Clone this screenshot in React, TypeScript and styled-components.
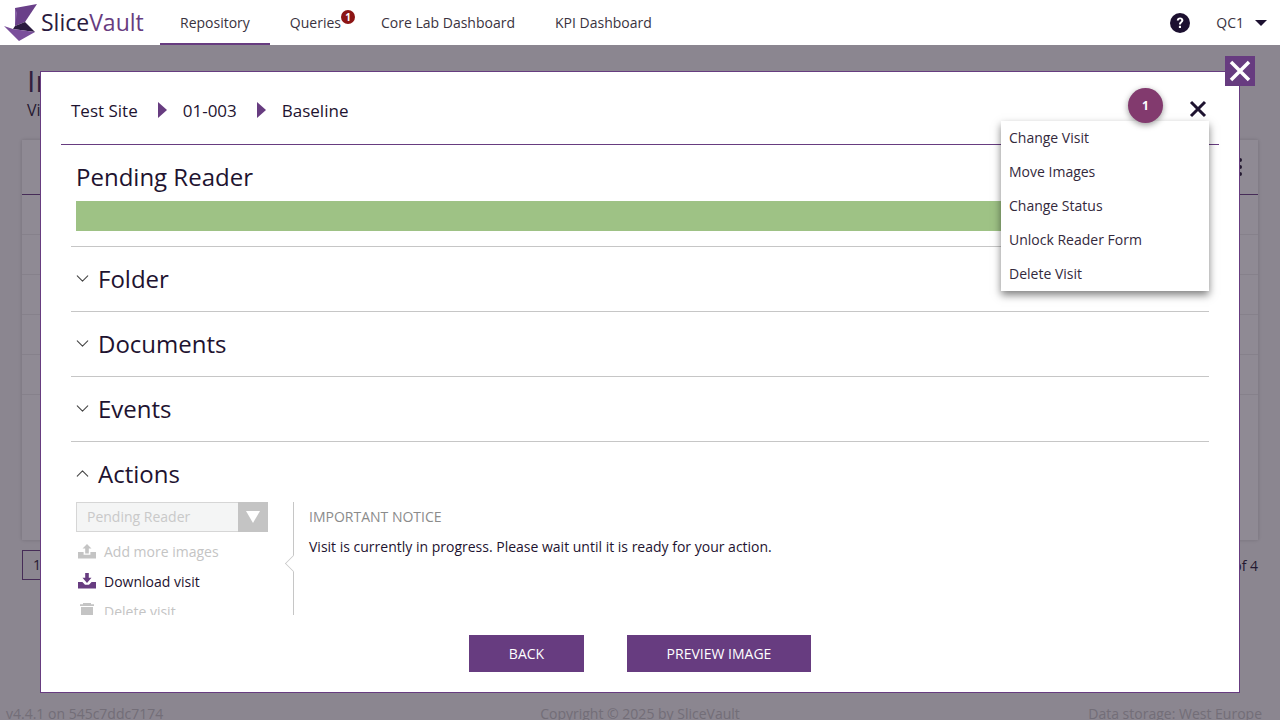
import styled, { createGlobalStyle } from 'styled-components';
import { ChevronDown, ChevronUp } from 'lucide-react';

const purple = '#673c80';
const ink = '#1e1330';

const GlobalStyle = createGlobalStyle`
  html, body {
    margin: 0;
    padding: 0;
    height: 100%;
    overflow: hidden;
    font-family: "Open Sans", "Liberation Sans", sans-serif;
    color: ${ink};
    background: #f7f7f7;
  }
  * { box-sizing: border-box; }
`;

const Logo = () => (
  <svg width="34" height="38" viewBox="0 0 34 38">
    <path d="M11 4 L33 0 L21 18 L11 22 Z" fill="#6a4089" />
    <path d="M21 18 L11 22 L9 25 L31 28 Z" fill="#2a1a3e" />
    <path d="M0 22 L9 25 L31 28 L15 37 Z" fill="#7a4f9b" />
    <path d="M11 4 L13 9 L11 22 Z" fill="#8a63a8" />
  </svg>
);

const HelpIcon = () => (
  <svg width="20" height="20" viewBox="0 0 20 20">
    <circle cx="10" cy="10" r="10" fill="#1c1030" />
    <path d="M6.8 7.6 C6.8 5.6 8.2 4.4 10.1 4.4 C12 4.4 13.4 5.5 13.4 7.2 C13.4 9.4 10.9 9.5 10.9 11.6 L9 11.6 C9 8.8 11.3 8.7 11.3 7.3 C11.3 6.6 10.8 6.2 10.1 6.2 C9.3 6.2 8.8 6.8 8.8 7.6 Z" fill="#fff" />
    <rect x="8.9" y="12.8" width="2.1" height="2.2" fill="#fff" />
  </svg>
);

const UploadIcon = ({ color }: { color: string }) => (
  <svg width="18" height="16" viewBox="0 0 18 16">
    <path d="M9 1 L13.5 5.6 L10.8 5.6 L10.8 10.4 L7.2 10.4 L7.2 5.6 L4.5 5.6 Z" fill={color} />
    <path d="M0 9 L5.6 9 L5.6 11.8 L12.4 11.8 L12.4 9 L18 9 L18 15.5 L0 15.5 Z" fill={color} />
  </svg>
);

const DownloadIcon = ({ color }: { color: string }) => (
  <svg width="18" height="16" viewBox="0 0 18 16">
    <path d="M7.2 0 L10.8 0 L10.8 4.8 L13.5 4.8 L9 10 L4.5 4.8 L7.2 4.8 Z" fill={color} />
    <path d="M0 9 L4.4 9 L7 11.8 L11 11.8 L13.6 9 L18 9 L18 15.5 L0 15.5 Z" fill={color} />
  </svg>
);

const TrashIcon = ({ color }: { color: string }) => (
  <svg width="18" height="16" viewBox="0 0 18 16">
    <path d="M5 0 L13 0 L13 1.2 L16 1.2 L16 3 L2 3 L2 1.2 L5 1.2 Z" fill={color} />
    <path d="M3 4 L15 4 L15 15.5 L3 15.5 Z" fill={color} />
  </svg>
);

const Crumb = () => (
  <CrumbWrap>
    <svg width="9" height="16" viewBox="0 0 9 16">
      <path d="M0 0 L9 8 L0 16 Z" fill={purple} />
    </svg>
  </CrumbWrap>
);

const CrumbWrap = styled.span`
  display: flex;
  margin-right: -4px;
`;

const Header = styled.header`
  position: relative;
  z-index: 1;
  height: 45px;
  display: flex;
  align-items: stretch;
  background: #fff;
`;

const Brand = styled.div`
  width: 160px;
  display: flex;
  align-items: center;
  gap: 3px;
  padding-left: 4px;
  font-size: 23px;
  color: #2a1a3e;
  span { color: ${purple}; }
  div { padding-bottom: 2px; }
`;

const Nav = styled.nav`
  display: flex;
  flex: 1;
`;

const NavItem = styled.a<{ $active?: boolean }>`
  position: relative;
  display: flex;
  align-items: center;
  padding: 2px 20px 0;
  font-size: 14px;
  color: #3a3340;
  border-bottom: 2px solid ${p => (p.$active ? purple : 'transparent')};
`;

const NavBadge = styled.span`
  position: absolute;
  top: 10px;
  right: 6px;
  width: 14px;
  height: 14px;
  border-radius: 50%;
  background: #8c1515;
  color: #fff;
  font-size: 10px;
  font-weight: 700;
  line-height: 14px;
  text-align: center;
`;

const HeaderRight = styled.div`
  display: flex;
  align-items: center;
  padding-right: 13px;
  font-size: 14px;
  color: #3a3340;
`;

const UserName = styled.span`
  margin-left: 26px;
`;

const Caret = styled.span`
  margin-left: 11px;
  width: 0;
  height: 0;
  border-left: 6px solid transparent;
  border-right: 6px solid transparent;
  border-top: 6px solid #1c1030;
`;

const Page = styled.main`
  padding: 0 22px;
  height: 675px;
  display: flex;
  flex-direction: column;
`;

const PageTitle = styled.h1`
  margin: 16px 0 0;
  padding-left: 5px;
  height: 41px;
  font-size: 30px;
  font-weight: 400;
  line-height: 40px;
  color: #3c2350;
`;

const PageSub = styled.div`
  padding-left: 5px;
  font-size: 16px;
  line-height: 16px;
  height: 38px;
`;

const TableCard = styled.section`
  height: 400px;
  background: #fff;
  box-shadow: 0 0 4px rgba(0, 0, 0, 0.2);
  display: flex;
  flex-direction: column;
`;

const TableHead = styled.div`
  height: 55px;
  border-bottom: 1px solid ${purple};
  display: flex;
  justify-content: flex-end;
  align-items: center;
  padding: 0 16px;
`;

const Dots = styled.div`
  display: grid;
  gap: 3px;
  i {
    display: block;
    width: 4px;
    height: 4px;
    border-radius: 50%;
    background: ${ink};
  }
`;

const TableRow = styled.div`
  height: 40px;
  border-bottom: 1px solid #ececec;
`;

const Pager = styled.div`
  margin-top: 10px;
  height: 30px;
  display: flex;
  justify-content: space-between;
  align-items: center;
  font-size: 14px;
`;

const PagerBox = styled.div`
  width: 40px;
  height: 30px;
  border: 1px solid ${purple};
  padding-left: 10px;
  line-height: 28px;
`;

const Footer = styled.footer`
  position: absolute;
  left: 0;
  right: 0;
  top: 704px;
  padding: 0 18px;
  display: grid;
  grid-template-columns: 1fr auto 1fr;
  font-size: 14px;
  line-height: 19px;
  color: #c4c4c4;
`;

const FooterLeft = styled.span`
  margin-left: -12px;
`;

const FooterRight = styled.span`
  text-align: right;
`;

const Backdrop = styled.div`
  position: fixed;
  inset: 45px 0 0 0;
  z-index: 2;
  background: rgba(40, 30, 50, 0.52);
`;

const Modal = styled.div`
  position: absolute;
  left: 40px;
  top: 26px;
  width: 1200px;
  height: 622px;
  background: #fff;
  border: 1px solid ${purple};
  padding: 0 20px;
  display: flex;
  flex-direction: column;
`;

const OuterClose = styled.button`
  position: absolute;
  left: 1225px;
  top: 11px;
  width: 30px;
  height: 30px;
  padding: 0;
  border: 0;
  background: ${purple};
  display: flex;
  align-items: center;
  justify-content: center;
`;

const ModalTop = styled.div`
  position: relative;
  height: 73px;
  flex: none;
  display: flex;
  align-items: center;
  gap: 20px;
  padding: 4px 0 0 10px;
  border-bottom: 1px solid ${purple};
  font-size: 17px;
`;

const Counter = styled.span`
  position: absolute;
  z-index: 2;
  left: 1067px;
  top: 16px;
  width: 35px;
  height: 35px;
  border-radius: 50%;
  background: #823a6e;
  color: #fff;
  font-size: 12px;
  font-weight: 700;
  line-height: 35px;
  text-align: center;
  box-shadow: 0 2px 6px rgba(0, 0, 0, 0.4);
`;

const InnerClose = styled.span`
  position: absolute;
  left: 1128px;
  top: 28px;
  width: 18px;
  height: 18px;
`;

const ActionMenu = styled.ul`
  position: absolute;
  left: 940px;
  top: 49px;
  z-index: 1;
  width: 208px;
  margin: 0;
  padding: 0;
  list-style: none;
  background: #fff;
  box-shadow: 0 4px 8px rgba(0, 0, 0, 0.5);
`;

const ActionMenuItem = styled.li`
  height: 34px;
  padding-left: 8px;
  font-size: 14px;
  line-height: 34px;
  color: #33293c;
`;

const Status = styled.div`
  flex: none;
  padding: 14px 10px 0 15px;
`;

const StatusTitle = styled.div`
  font-size: 24px;
  line-height: 36px;
  height: 42px;
`;

const StatusBar = styled.div`
  height: 30px;
  background: #9ec285;
`;

const Section = styled.div`
  flex: none;
  height: 65px;
  margin: 0 10px;
  border-top: 1px solid #c6c6c6;
  display: flex;
  align-items: center;
  gap: 5px;
  padding: 0 0 1px 0;
  font-size: 24px;
  line-height: 30px;
  svg { margin-left: 1px; }
`;

const SectionGap = styled.div`
  height: 15px;
  flex: none;
`;

const ActionsBody = styled.div`
  flex: none;
  height: 113px;
  margin: -4px 10px 0 15px;
  display: flex;
  overflow: hidden;
`;

const ActionList = styled.div`
  width: 192px;
  flex: none;
`;

const StatusSelect = styled.div`
  height: 30px;
  display: flex;
  background: #f4f5f5;
  border: 1px solid #d6d6d6;
  border-right: 0;
  font-size: 14px;
  line-height: 28px;
  color: #c9c9c9;
  margin-bottom: 4px;
`;

const SelectText = styled.span`
  flex: 1;
  padding-left: 10px;
`;

const SelectArrow = styled.span`
  width: 30px;
  margin: -1px 0;
  background: #c4c4c4;
  display: flex;
  align-items: center;
  justify-content: center;
  &::after {
    content: '';
    border-left: 7px solid transparent;
    border-right: 7px solid transparent;
    border-top: 12px solid #fff;
  }
`;

const ActionLink = styled.div<{ $disabled?: boolean }>`
  height: 30px;
  display: flex;
  align-items: center;
  gap: 8px;
  padding-left: 2px;
  font-size: 14px;
  color: ${p => (p.$disabled ? '#c4c4c4' : ink)};
`;

const Notice = styled.div`
  position: relative;
  flex: 1;
  margin-left: 25px;
  padding: 5px 15px;
  border-left: 1px solid #c6c6c6;
  font-size: 14px;
  &::before {
    content: '';
    position: absolute;
    left: -8px;
    top: 54px;
    width: 14px;
    height: 14px;
    background: #fff;
    border-left: 1px solid #c6c6c6;
    border-bottom: 1px solid #c6c6c6;
    transform: rotate(45deg) scale(0.8);
  }
`;

const NoticeTitle = styled.div`
  color: #8b8b8b;
  line-height: 20px;
  margin-bottom: 10px;
`;

const NoticeText = styled.div`
  line-height: 20px;
`;

const Buttons = styled.div`
  flex: none;
  margin-top: 20px;
  display: flex;
  justify-content: center;
  gap: 43px;
`;

const Button = styled.button<{ $wide?: boolean }>`
  width: ${p => (p.$wide ? '184px' : '115px')};
  height: 37px;
  padding: 0;
  border: 0;
  background: ${purple};
  color: #fff;
  font-family: inherit;
  font-size: 14px;
`;

const sectionIcon = { size: 21, strokeWidth: 1.2, color: '#444' };

const App = () => {
  return (
    <>
      <GlobalStyle />
      <Header>
        <Brand>
          <Logo />
          <div>Slice<span>Vault</span></div>
        </Brand>
        <Nav>
          <NavItem $active>Repository</NavItem>
          <NavItem>
            Queries
            <NavBadge>1</NavBadge>
          </NavItem>
          <NavItem>Core Lab Dashboard</NavItem>
          <NavItem>KPI Dashboard</NavItem>
        </Nav>
        <HeaderRight>
          <HelpIcon />
          <UserName>QC1</UserName>
          <Caret />
        </HeaderRight>
      </Header>

      <Page>
        <PageTitle>Image repository</PageTitle>
        <PageSub>Visits</PageSub>
        <TableCard>
          <TableHead>
            <Dots><i /><i /><i /></Dots>
          </TableHead>
          {[0, 1, 2, 3, 4].map(i => <TableRow key={i} />)}
        </TableCard>
        <Pager>
          <PagerBox>1</PagerBox>
          <span>1 of 4</span>
        </Pager>
      </Page>
      <Footer>
        <FooterLeft>v4.4.1 on 545c7ddc7174</FooterLeft>
        <span>Copyright © 2025 by SliceVault</span>
        <FooterRight>Data storage: West Europe</FooterRight>
      </Footer>

      <Backdrop>
        <Modal>
          <ModalTop>
            <span>Test Site</span>
            <Crumb />
            <span>01-003</span>
            <Crumb />
            <span>Baseline</span>
            <Counter>1</Counter>
            <InnerClose>
              <svg width="18" height="18" viewBox="0 0 18 18">
                <path d="M2 2 L16 16 M16 2 L2 16" stroke={ink} strokeWidth="3" />
              </svg>
            </InnerClose>
            <ActionMenu>
              <ActionMenuItem>Change Visit</ActionMenuItem>
              <ActionMenuItem>Move Images</ActionMenuItem>
              <ActionMenuItem>Change Status</ActionMenuItem>
              <ActionMenuItem>Unlock Reader Form</ActionMenuItem>
              <ActionMenuItem>Delete Visit</ActionMenuItem>
            </ActionMenu>
          </ModalTop>
          <Status>
            <StatusTitle>Pending Reader</StatusTitle>
            <StatusBar />
          </Status>
          <SectionGap />
          <Section><ChevronDown {...sectionIcon} />Folder</Section>
          <Section><ChevronDown {...sectionIcon} />Documents</Section>
          <Section><ChevronDown {...sectionIcon} />Events</Section>
          <Section><ChevronUp {...sectionIcon} />Actions</Section>
          <ActionsBody>
            <ActionList>
              <StatusSelect>
                <SelectText>Pending Reader</SelectText>
                <SelectArrow />
              </StatusSelect>
              <ActionLink $disabled><UploadIcon color="#c4c4c4" />Add more images</ActionLink>
              <ActionLink><DownloadIcon color={purple} />Download visit</ActionLink>
              <ActionLink $disabled><TrashIcon color="#c4c4c4" />Delete visit</ActionLink>
            </ActionList>
            <Notice>
              <NoticeTitle>IMPORTANT NOTICE</NoticeTitle>
              <NoticeText>Visit is currently in progress. Please wait until it is ready for your action.</NoticeText>
            </Notice>
          </ActionsBody>
          <Buttons>
            <Button>BACK</Button>
            <Button $wide>PREVIEW IMAGE</Button>
          </Buttons>
        </Modal>
        <OuterClose>
          <svg width="22" height="22" viewBox="0 0 22 22">
            <path d="M2 2 L20 20 M20 2 L2 20" stroke="#fff" strokeWidth="3.5" />
          </svg>
        </OuterClose>
      </Backdrop>
    </>
  );
};

export default App;
